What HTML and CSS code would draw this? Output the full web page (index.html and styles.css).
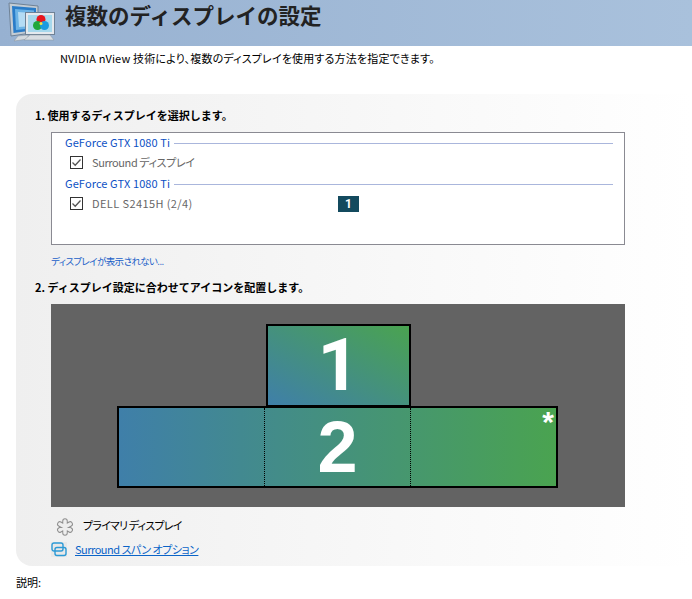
FILE: index.html
```html
<!DOCTYPE html>
<html lang="ja">
<head>
  <meta charset="UTF-8" />
  <title>複数のディスプレイの設定</title>
  <link rel="stylesheet" href="styles.css">
</head>
<body>
  <div class="banner">
    <svg class="banner-icon" width="60" height="46" viewBox="0 0 60 46">
      <path d="M9 3 L38 6 L38 32 L11 36 Z" fill="#c3ccd4" stroke="#6f8296"/>
      <path d="M12 6 L36 8 L36 30 L13.500 33 Z" fill="#2a7cc8"/>
      <path d="M15 9 L34 10.500 L34 28 L16 30 Z" fill="#6db4e6"/>
      <path d="M18 12 L32 13 L32 26 L19 27 Z" fill="#b4dcf4"/>
      <path d="M14 41 L18 36 L28 35 L28 39 Z" fill="#d3d9de" stroke="#8a949c" stroke-width="0.500"/>
      <rect x="25.500" y="12.500" width="29" height="22" fill="#e4e9ee" stroke="#6f8296"/>
      <rect x="28" y="15" width="24" height="17" fill="#a6d8ec"/>
      <path d="M24 40 L54 40 L50 35 L30 35 Z" fill="#d8dde2" stroke="#8a949c" stroke-width="0.500"/>
      <circle cx="41" cy="19.500" r="4.500" fill="#e8141c"/>
      <circle cx="37.500" cy="25.500" r="4.500" fill="#1fa83c"/>
      <circle cx="44.500" cy="25.500" r="4.500" fill="#1c9be0"/>
      <circle cx="41" cy="23.500" r="1.500" fill="#f2e04a"/>
    </svg>
    <h1>複数のディスプレイの設定</h1>
  </div>
  <p class="intro">NVIDIA nView 技術により、複数のディスプレイを使用する方法を指定できます。</p>

  <div class="panel">
    <h2 class="step">1. 使用するディスプレイを選択します。</h2>
    <div class="display-list">
      <div class="gpu-title"><span>GeForce GTX 1080 Ti</span><i></i></div>
      <div class="display-row">
        <svg class="check" width="13" height="13" viewBox="0 0 13 13"><rect x="0.500" y="0.500" width="12" height="12" fill="#fff" stroke="#333"/><path d="M2.500 6.500 L5.200 9.200 L10.500 3.500" fill="none" stroke="#555" stroke-width="1.300"/></svg>
        <span class="display-label">Surround ディスプレイ</span>
      </div>
      <div class="gpu-title"><span>GeForce GTX 1080 Ti</span><i></i></div>
      <div class="display-row">
        <svg class="check" width="13" height="13" viewBox="0 0 13 13"><rect x="0.500" y="0.500" width="12" height="12" fill="#fff" stroke="#333"/><path d="M2.500 6.500 L5.200 9.200 L10.500 3.500" fill="none" stroke="#555" stroke-width="1.300"/></svg>
        <span class="display-label display-name">DELL S2415H (2/4)</span>
        <b class="badge">1</b>
      </div>
    </div>
    <a class="missing-link">ディスプレイが表示されない...</a>
    <h2 class="step step-two">2. ディスプレイ設定に合わせてアイコンを配置します。</h2>

    <div class="arrange">
      <div class="monitor monitor-top">1</div>
      <div class="monitor monitor-wide">
        <div class="seg"></div>
        <div class="seg seg-mid">2</div>
        <div class="seg"></div>
        <span class="star">*</span>
      </div>
    </div>

    <div class="legend">
      <svg width="18" height="18" viewBox="0 0 18 18">
        <path d="M9 3 V15 M3.800 6 L14.200 12 M14.200 6 L3.800 12" stroke="#8f8f8f" stroke-width="5.500" stroke-linecap="round"/>
        <path d="M9 3 V15 M3.800 6 L14.200 12 M14.200 6 L3.800 12" stroke="#eee" stroke-width="3.500" stroke-linecap="round"/>
      </svg>
      <span>プライマリ ディスプレイ</span>
    </div>
    <div class="span-option">
      <svg width="16" height="15" viewBox="0 0 16 15"><rect width="16" height="15" fill="#e8e8e8"/><rect x="1" y="1" width="11" height="8" rx="2" fill="none" stroke="#2c9ad6" stroke-width="1.400"/><rect x="4" y="5.500" width="11" height="8" rx="2" fill="none" stroke="#2c9ad6" stroke-width="1.400"/></svg>
      <a>Surround スパン オプション</a>
    </div>
  </div>

  <div class="desc">説明:</div>
</body>
</html>
```

FILE: styles.css
```css
html, body {
  margin: 0;
  padding: 0;
}
body {
  width: 692px;
  height: 599px;
  overflow: hidden;
  background: #fff;
  color: #000;
  font-family: "Noto Sans CJK JP", "Liberation Sans", sans-serif;
  font-size: 11px;
  font-feature-settings: "palt";
}
.banner {
  height: 46px;
  display: flex;
  align-items: center;
  background: linear-gradient(to right, #97b1d1, #a9c1dc);
}
.banner-icon {
  flex: none;
}
.banner h1 {
  margin: 0 0 0 5px;
  font-size: 21.500px;
  font-weight: 700;
  line-height: 30px;
  color: #222;
  font-feature-settings: normal;
  position: relative;
  top: -8px;
}
.intro {
  margin: 4px 0 0 60px;
  line-height: 16px;
  letter-spacing: 0.170px;
}
.panel {
  margin: 28px 0 0 16px;
  height: 472px;
  box-sizing: border-box;
  padding: 13px 0 0 18px;
  border-radius: 16px 0 0 16px;
  background: linear-gradient(to right, #efefef, #fff);
}
.step {
  margin: 0 0 0 1px;
  font-size: 11px;
  font-weight: 700;
  line-height: 16px;
  font-feature-settings: normal;
}
.display-list {
  box-sizing: border-box;
  width: 574px;
  height: 113px;
  margin: 9px 0 0 17px;
  padding: 1px 11px 0 13px;
  background: #fff;
  border: 1px solid #8a8a92;
}
.gpu-title {
  display: flex;
  align-items: center;
  gap: 4px;
  height: 16px;
  color: #0b50c4;
  letter-spacing: 0.100px;
}
.gpu-title i {
  flex: 1;
  height: 1px;
  margin-top: 2px;
  background: #aab6dc;
}
.display-row {
  display: flex;
  align-items: center;
  height: 25px;
  padding-left: 5px;
  color: #666;
}
.check {
  flex: none;
  margin-right: 9px;
}
.display-label {
  margin-top: -2px;
  letter-spacing: -0.400px;
}
.display-name {
  width: 246px;
  letter-spacing: 0.400px;
}
.badge {
  width: 21px;
  height: 16px;
  line-height: 16px;
  text-align: center;
  font-family: Roboto, sans-serif;
  font-size: 12px;
  color: #fff;
  background: #134a5e;
}
.missing-link {
  display: block;
  margin: 8px 0 0 17px;
  line-height: 16px;
  font-size: 9.500px;
  letter-spacing: -0.600px;
  color: #1a5fc8;
}
.step-two {
  margin-top: 10px;
}
.arrange {
  position: relative;
  width: 574px;
  height: 203px;
  margin: 9px 0 0 17px;
  background: #636363;
}
.monitor {
  position: absolute;
  box-sizing: border-box;
  border: 2px solid #000;
  color: #fff;
  font-family: "Liberation Sans", sans-serif;
  font-weight: 700;
  font-size: 72px;
}
.monitor-top {
  left: 215px;
  top: 20px;
  width: 145px;
  height: 83px;
  line-height: 78px;
  text-align: center;
  font-family: Roboto, sans-serif;
  font-size: 73px;
  background: linear-gradient(to top right, #3f7fa9, #4aa350);
}
.monitor-wide {
  left: 66px;
  top: 102px;
  width: 441px;
  height: 82px;
  display: flex;
  background: linear-gradient(to right, #3f7fa9, #4aa350);
}
.seg {
  flex: 1;
  text-align: center;
  line-height: 78px;
}
.seg-mid {
  border-left: 1px dotted #000;
  border-right: 1px dotted #000;
}
.star {
  position: absolute;
  right: 2px;
  top: -1px;
  font-size: 30px;
  line-height: 30px;
}
.legend {
  display: flex;
  align-items: center;
  height: 18px;
  margin: 11px 0 0 22px;
}
.legend span {
  margin: -5px 0 0 9px;
  letter-spacing: -0.800px;
}
.span-option {
  display: flex;
  align-items: center;
  margin: 5px 0 0 17px;
  height: 16px;
}
.span-option a {
  margin-left: 8px;
  color: #0a64c8;
  text-decoration: underline;
  letter-spacing: -0.500px;
}
.desc {
  margin: 8px 0 0 16px;
  line-height: 16px;
}
```
